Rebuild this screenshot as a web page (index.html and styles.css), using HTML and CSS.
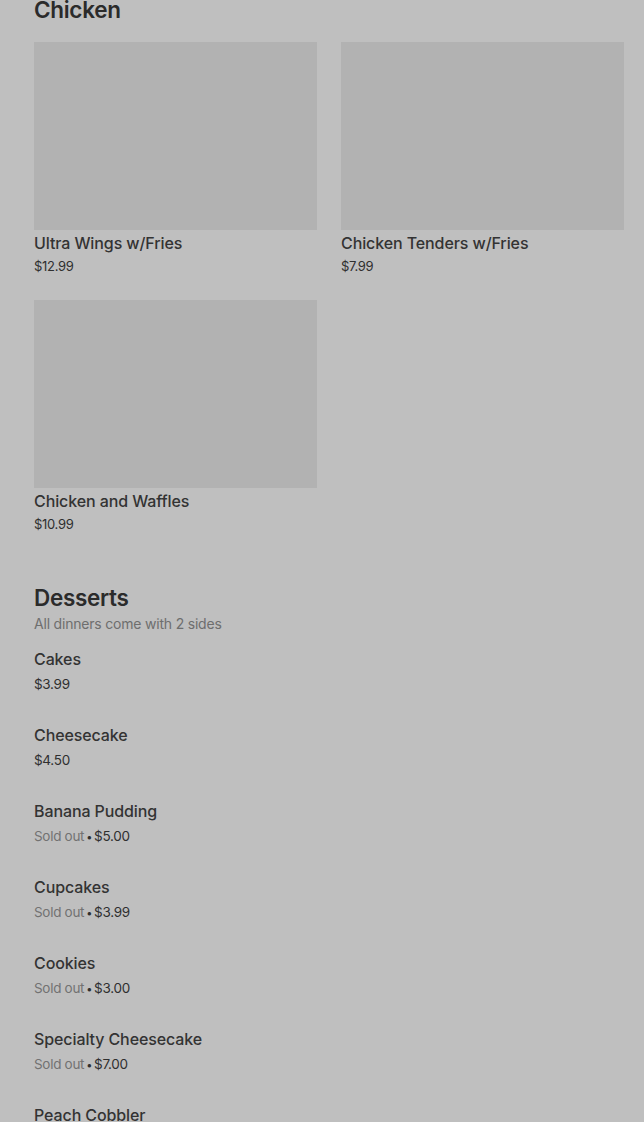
FILE: index.html
```html
<!DOCTYPE html>
<html>
<head>
<meta charset="utf-8">
<link rel="stylesheet" href="styles.css">
</head>
<body>
<main class="menu">
  <section class="category">
    <h2 class="cat-title">Chicken</h2>
    <div class="grid">
      <div class="card">
        <div class="card-img"></div>
        <div class="item-name">Ultra Wings w/Fries</div>
        <div class="item-price">$12.99</div>
      </div>
      <div class="card">
        <div class="card-img"></div>
        <div class="item-name">Chicken Tenders w/Fries</div>
        <div class="item-price">$7.99</div>
      </div>
      <div class="card">
        <div class="card-img"></div>
        <div class="item-name">Chicken and Waffles</div>
        <div class="item-price">$10.99</div>
      </div>
    </div>
  </section>
  <section class="category desserts">
    <h2 class="cat-title">Desserts</h2>
    <p class="cat-sub">All dinners come with 2 sides</p>
    <ul class="list">
      <li class="row"><div class="item-name">Cakes</div><div class="item-price">$3.99</div></li>
      <li class="row"><div class="item-name">Cheesecake</div><div class="item-price">$4.50</div></li>
      <li class="row"><div class="item-name">Banana Pudding</div><div class="item-price"><span class="sold">Sold out</span><span class="dot">•</span>$5.00</div></li>
      <li class="row"><div class="item-name">Cupcakes</div><div class="item-price"><span class="sold">Sold out</span><span class="dot">•</span>$3.99</div></li>
      <li class="row"><div class="item-name">Cookies</div><div class="item-price"><span class="sold">Sold out</span><span class="dot">•</span>$3.00</div></li>
      <li class="row"><div class="item-name">Specialty Cheesecake</div><div class="item-price"><span class="sold">Sold out</span><span class="dot">•</span>$7.00</div></li>
      <li class="row"><div class="item-name">Peach Cobbler</div><div class="item-price"><span class="sold">Sold out</span><span class="dot">•</span>$6.00</div></li>
    </ul>
  </section>
</main>
</body>
</html>
```
FILE: styles.css
```css
html, body {
  margin: 0;
  padding: 0;
  background: #bfbfbf;
  overflow: hidden;
}
body {
  font-family: Inter, "Noto Sans", sans-serif;
  color: #2f2f2f;
}
.menu {
  padding: 0 20px 0 34px;
  margin-top: -5px;
}
.cat-title {
  margin: 0;
  font-size: 22.5px;
  line-height: 30px;
  font-weight: 600;
  color: #2b2b2b;
  letter-spacing: -0.3px;
}
.grid {
  margin-top: 17px;
  display: grid;
  grid-template-columns: 1fr 1fr;
  column-gap: 24px;
  row-gap: 24px;
}
.card-img {
  height: 188px;
  background: #b2b2b2;
}
.item-name {
  font-size: 16px;
  line-height: 24px;
  font-weight: 500;
  color: #333333;
  letter-spacing: -0.1px;
}
.item-price {
  font-size: 13.5px;
  line-height: 20px;
  color: #2f2f2f;
  letter-spacing: -0.3px;
}
.card .item-name {
  margin-top: 1px;
}
.card .item-price {
  font-size: 13px;
  margin-top: 1px;
}
.desserts {
  margin-top: 49px;
}
.cat-sub {
  margin: 1px 0 0;
  font-size: 14px;
  line-height: 20px;
  color: #6e6e6e;
  letter-spacing: -0.2px;
}
.list {
  list-style: none;
  margin: 13px 0 0;
  padding: 0;
  display: flex;
  flex-direction: column;
  gap: 29px;
}
.row .item-price {
  margin-top: 3px;
  height: 20px;
}
.sold {
  color: #727272;
}
.dot {
  margin: 0 2px;
  font-size: 11px;
  line-height: 1;
}
```
